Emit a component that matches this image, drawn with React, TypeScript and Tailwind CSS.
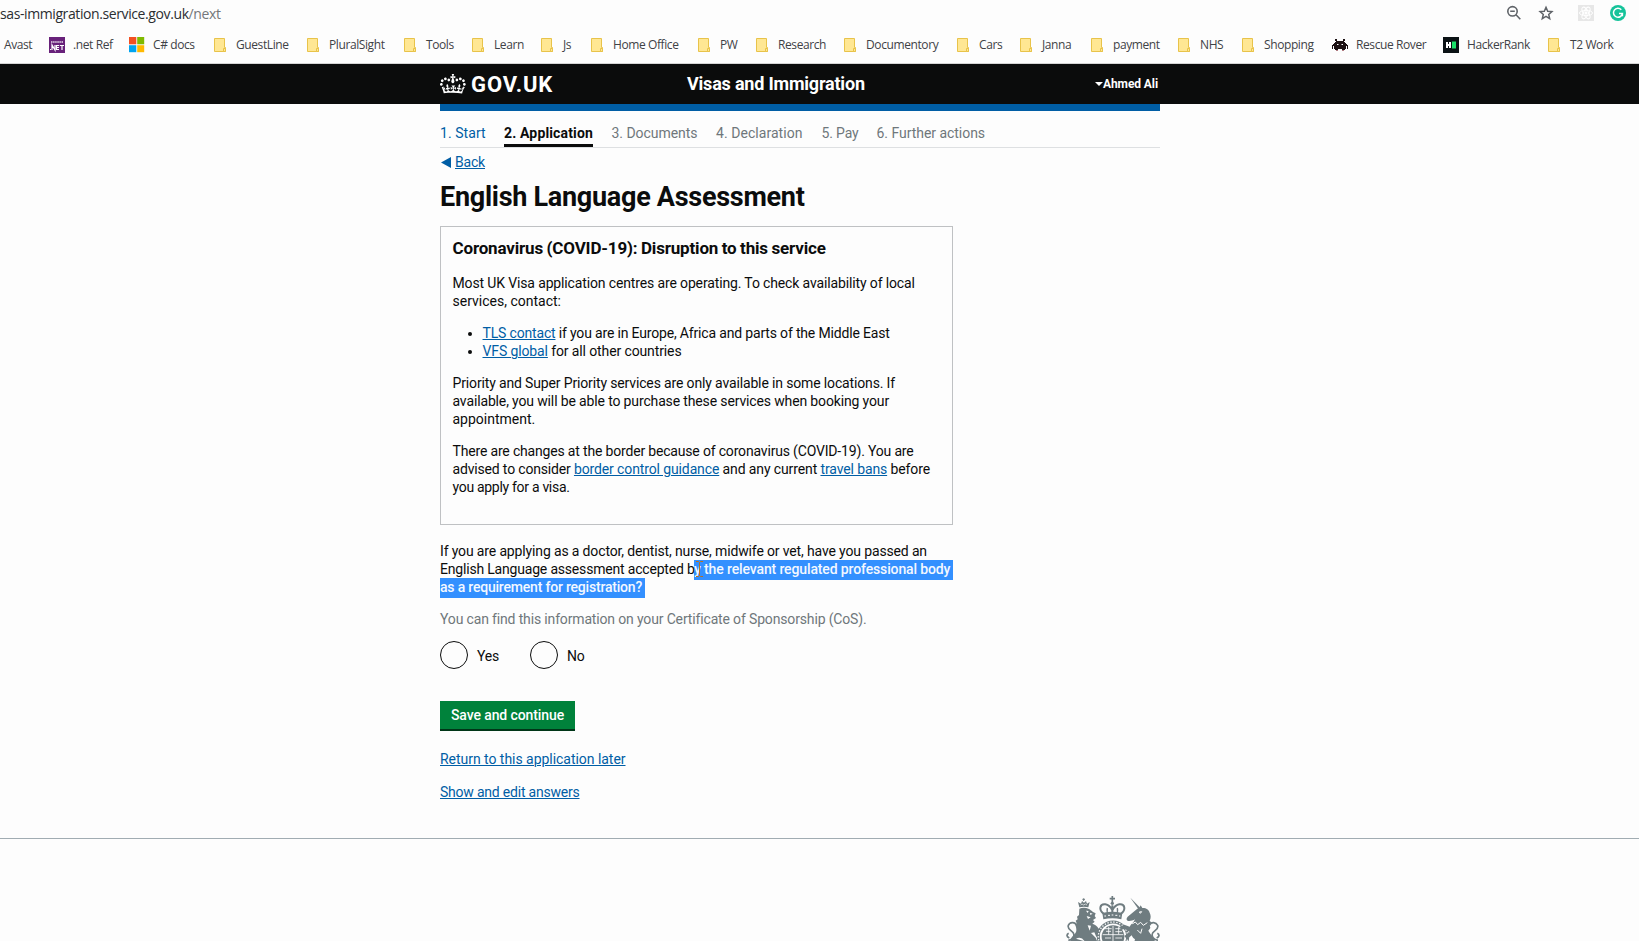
import React, { type ReactNode } from "react";

const FolderIcon = () => (
  <svg viewBox="0 0 16 16" className="h-4 w-4 shrink-0">
    <path d="M2.5 1.5h10v9h1v4h-11z" fill="#ffe793" stroke="#e8c34a" />
    <path d="M11.5 14.5v-3h2v3z" fill="#ffe793" stroke="#e8c34a" />
  </svg>
);

const NetIcon = () => (
  <svg viewBox="0 0 16 16" className="h-4 w-4 shrink-0">
    <rect width="16" height="16" fill="#68217a" />
    <path d="M2 5h12" stroke="#fff" strokeWidth="1.300" strokeDasharray="1.500 .6" opacity=".85" />
    <path d="M1 12.500h1M3 13V8l3 5V8M10 8.500H7.500v4H10M7.500 10.500H10M10.800 8.500H15M13 8.500V13" stroke="#fff" strokeWidth="1.200" fill="none" />
  </svg>
);

const MicrosoftIcon = () => (
  <svg viewBox="0 0 16 16" className="h-4 w-4 shrink-0">
    <path d="M0 0h7.300v7.300H0z" fill="#f25022" />
    <path d="M8.200 0h7v7.300h-7z" fill="#7fba00" />
    <path d="M0 8.200h7.300v7H0z" fill="#00a4ef" />
    <path d="M8.200 8.200h7v7h-7z" fill="#ffb900" />
  </svg>
);

const InvaderIcon = () => (
  <svg viewBox="0 0 16 16" className="h-4 w-4 shrink-0" fill="#1c1113">
    <path d="M3 2h2v2H3zM11 2h2v2h-2zM4 4h8v1H4zM3 5h10v1h1v1h1v1h1v4h-1V9h-1v3H2V9H1v3H0V8h1V7h1V6h1zM3 12h3v1H3zM10 12h3v1h-3z" />
    <path d="M5 7h1.500v1H5zM9.500 7H11v1H9.500z" fill="#fff" />
    <path d="M4 13h2v1H4zM10 13h2v1h-2z" fill="#b07a80" />
  </svg>
);

const HackerRankIcon = () => (
  <svg viewBox="0 0 16 16" className="h-4 w-4 shrink-0">
    <rect width="16" height="16" fill="#0b1215" />
    <path d="M3 5h2v2h1V5h2v6H6V9H5v2H3z" fill="#fff" />
    <rect x="9" y="4.500" width="4" height="7" fill="#1be26a" />
  </svg>
);

type Bookmark = { label: string; text: string; icon?: ReactNode };

const folder = <FolderIcon />;

const bookmarks: Bookmark[] = [
  { label: "Avast", text: "w-[29px]" },
  { label: ".net Ref", text: "w-[40px]", icon: <NetIcon /> },
  { label: "C# docs", text: "w-[43px]", icon: <MicrosoftIcon /> },
  { label: "GuestLine", text: "w-[53px]", icon: folder },
  { label: "PluralSight", text: "w-[57px]", icon: folder },
  { label: "Tools", text: "w-[28px]", icon: folder },
  { label: "Learn", text: "w-[29px]", icon: folder },
  { label: "Js", text: "w-[10px]", icon: folder },
  { label: "Home Office", text: "w-[67px]", icon: folder },
  { label: "PW", text: "w-[18px]", icon: folder },
  { label: "Research", text: "w-[48px]", icon: folder },
  { label: "Documentory", text: "w-[73px]", icon: folder },
  { label: "Cars", text: "w-[23px]", icon: folder },
  { label: "Janna", text: "w-[31px]", icon: folder },
  { label: "payment", text: "w-[47px]", icon: folder },
  { label: "NHS", text: "w-[24px]", icon: folder },
  { label: "Shopping", text: "w-[52px]", icon: folder },
  { label: "Rescue Rover", text: "w-[71px]", icon: <InvaderIcon /> },
  { label: "HackerRank", text: "w-[63px]", icon: <HackerRankIcon /> },
  { label: "T2 Work", text: "w-[46px]", icon: folder },
];

function BrowserBar() {
  return (
    <div className="h-16 border-b border-[#d5d5d5] font-['Open_Sans',sans-serif]">
      <div className="flex h-[26px] items-start justify-between pr-[13px]">
        <div className="pt-1 text-[14px] leading-5 tracking-[-0.4px] whitespace-nowrap text-[#2b2e31]">
          sas-immigration.service.gov.uk<span className="text-[#74777a]">/next</span>
        </div>
        <div className="flex items-center pt-[5px]">
          <svg viewBox="0 0 16 16" className="mr-4 h-4 w-4" fill="none" stroke="#5f6368" strokeWidth="1.600">
            <circle cx="6.500" cy="6.300" r="4.700" />
            <path d="M10 9.800l4.300 4.400M4.200 6.300h4.600" />
          </svg>
          <svg viewBox="0 0 16 16" className="mr-6 h-4 w-4" fill="none" stroke="#5f6368" strokeWidth="1.500">
            <path d="M8 2.300l1.700 3.900 4.200.4-3.200 2.800 1 4.200L8 11.400l-3.700 2.200 1-4.200L2.100 6.600l4.200-.4z" />
          </svg>
          <svg viewBox="0 0 16 16" className="mr-4 h-4 w-4" fill="none" stroke="#fff" strokeWidth="1">
            <rect width="16" height="16" fill="#e7e7e7" stroke="none" />
            <ellipse cx="8" cy="8" rx="6.500" ry="2.600" />
            <ellipse cx="8" cy="8" rx="6.500" ry="2.600" transform="rotate(60 8 8)" />
            <ellipse cx="8" cy="8" rx="6.500" ry="2.600" transform="rotate(120 8 8)" />
            <circle cx="8" cy="8" r="1.200" fill="#fff" />
          </svg>
          <svg viewBox="0 0 16 16" className="h-4 w-4" fill="none" stroke="#fff" strokeWidth="1.500">
            <circle cx="8" cy="8" r="8" fill="#15c39a" stroke="none" />
            <path d="M11.300 4.700A4.500 4.500 0 1 0 12.400 8.600H9M12.400 8.400v2.800" />
          </svg>
        </div>
      </div>
      <div className="flex gap-4 pt-[10px] pl-1">
        {bookmarks.map((b) => (
          <div key={b.label} className="flex shrink-0 items-center gap-2">
            {b.icon}
            <span className={`${b.text} text-[12px] leading-[18px] tracking-[-0.4px] whitespace-nowrap text-[#3f4246]`}>
              {b.label}
            </span>
          </div>
        ))}
      </div>
    </div>
  );
}

function Header() {
  return (
    <header className="h-10 bg-[#0b0c0c] text-white">
      <div className="ml-[440px] flex h-10 w-[720px] items-center pr-0.5">
        <svg viewBox="0 0 36 32" preserveAspectRatio="none" className="mr-[5px] mb-[3px] h-6 w-[26px]" fill="#fff">
          <path d="M6.700 12.200c1 .4 2.100-.1 2.500-1s-.1-2.100-1-2.500c-1-.4-2.100.1-2.500 1-.4 1 0 2.100 1 2.500m-4.300 2.500c1 .4 2.100-.1 2.500-1s-.1-2.100-1-2.500c-1-.4-2.100.1-2.500 1-.5 1 0 2.100 1 2.500m-1.300 4.800c1 .4 2.100-.1 2.500-1 .4-1-.1-2.100-1-2.500-1-.4-2.100.1-2.500 1-.4 1 0 2.100 1 2.500m10.400-5.800c1 .4 2.100-.1 2.500-1s-.1-2.100-1-2.500c-1-.4-2.100.1-2.500 1s0 2.100 1 2.500m17.400-1.500c-1 .4-2.100-.1-2.500-1s.1-2.100 1-2.500c1-.4 2.100.1 2.500 1 .5 1 0 2.100-1 2.500m4.300 2.500c-1 .4-2.100-.1-2.500-1s.1-2.100 1-2.500c1-.4 2.100.1 2.500 1 .5 1 0 2.100-1 2.500m1.300 4.800c-1 .4-2.100-.1-2.500-1-.4-1 .1-2.100 1-2.500 1-.4 2.100.1 2.500 1 .4 1 0 2.100-1 2.500m-10.400-5.800c-1 .4-2.100-.1-2.500-1s.1-2.100 1-2.500c1-.4 2.100.1 2.500 1s0 2.100-1 2.500m-5.300-4.900l2.400 1.300V6.500l-2.400.8c-.1-.1-.1-.2-.2-.2s1-3 1-3h-3.400l1 3c-.1.1-.2.1-.2.2-.1.1-2.400-.7-2.400-.7v3.500L17 8.800c-.1.1 0 .2.1.3l-1.400 4.200c-.1.2-.1.4-.1.7 0 1.100.8 2.100 1.900 2.200h.6C19.200 16 20 15.100 20 14c0-.2 0-.4-.1-.7l-1.400-4.200c.2-.1.3-.2.3-.3m-1 20.300c4.600 0 8.900.3 12.800.9 1.100-4.600 2.400-6.800 3.800-8.300l-2.600-.9c.3 1 .3 1.500 0 2.700-.4-.4-.8-1.100-1.100-2.300l-1.200 4c.7-.5 1.300-.8 2-.9-1.100 2.500-2.600 3.100-3.500 3-1.100-.2-1.700-1.200-1.500-2.100.3-1.200 1.500-1.500 2.100-.1 1.100-2.300-.8-3-2-2.300 1.900-1.900 2.100-3.500.6-5.600-2.100 1.600-2.100 3.200-1.200 5.500-1.200-1.400-3.200-.6-2.500 1.600.9-1.400 2.100-.5 1.900.8-.2 1.100-1.700 2.100-3.500 1.900-2.700-.2-2.900-2.100-2.900-3.600.7-.1 1.900.5 2.900 1.900l.4-4.300c-1.100 1.100-2.100 1.400-3.200 1.400.4-1.200 2.100-3 2.100-3h-5.400s1.700 1.900 2.100 3c-1.100 0-2.100-.2-3.200-1.400l.4 4.300c1-1.400 2.200-2 2.900-1.900-.1 1.500-.2 3.400-2.900 3.600-1.900.2-3.400-.8-3.500-1.900-.2-1.300 1-2.200 1.900-.8.700-2.300-1.200-3-2.500-1.600.9-2.200.9-3.900-1.200-5.500-1.500 2-1.300 3.700.6 5.600-1.200-.7-3.100 0-2 2.300.6-1.400 1.800-1.100 2.100.1.200.9-.3 1.900-1.500 2.100-.9.200-2.400-.5-3.500-3 .6 0 1.200.3 2 .9l-1.200-4c-.3 1.100-.7 1.900-1.100 2.300-.3-1.200-.2-1.800 0-2.700l-2.900.9C2.900 23 4.100 25.100 5.200 29.700 8.900 29.300 13.200 29.100 17.800 29.100" />
        </svg>
        <span className="w-[216px] pt-px text-[22px] leading-6 font-bold tracking-[0.9px]">GOV.UK</span>
        <span className="text-[18px] leading-6 font-bold tracking-[-0.2px] whitespace-nowrap">Visas and Immigration</span>
        <span className="ml-auto flex items-center text-[12px] leading-6 font-bold tracking-[-0.09px] whitespace-nowrap">
          <svg viewBox="0 0 8 4" className="h-1 w-2" fill="#fff">
            <path d="M0 0h8L4 4z" />
          </svg>
          Ahmed Ali
        </span>
      </div>
    </header>
  );
}

function Steps() {
  return (
    <nav className="flex h-[37px] items-start gap-[18.500px] border-b border-[#dee0e2] pt-[13px] leading-[18px] whitespace-nowrap text-[#6f777b]">
      <a className="w-[45.500px] tracking-[0.06px] text-[#005ea5]">1. Start</a>
      <a className="h-[23px] w-[89px] border-b-[3px] border-[#0b0c0c] font-bold tracking-[0.15px] text-[#0b0c0c]">2. Application</a>
      <a className="w-[86px] tracking-[-0.04px]">3. Documents</a>
      <a className="w-[87px] tracking-[0.05px]">4. Declaration</a>
      <a className="w-[36.500px] tracking-[-0.15px]">5. Pay</a>
      <a className="tracking-[-0.04px]">6. Further actions</a>
    </nav>
  );
}

const Link = ({ children, className = "" }: { children: ReactNode; className?: string }) => (
  <a className={`text-[#005ea5] underline decoration-1 underline-offset-[1px] ${className}`}>{children}</a>
);

function Notice() {
  return (
    <section className="mt-[13px] h-[299px] w-[513px] border border-[#bfc1c3] pt-[11px] pl-[11.500px] leading-[18px] whitespace-nowrap">
      <h2 className="mb-4 h-5 text-[17px] leading-5 font-bold tracking-[-0.170px] [word-spacing:-0.5px]">
        Coronavirus (COVID-19): Disruption to this service
      </h2>
      <p className="mb-[14px]">
        <span className="block tracking-[-0.138px]">Most UK Visa application centres are operating. To check availability of local</span>
        <span className="block">services, contact:</span>
      </p>
      <ul className="mb-[14px] list-disc pl-[30px]">
        <li className="tracking-[-0.17px]">
          <Link>TLS contact</Link> if you are in Europe, Africa and parts of the Middle East
        </li>
        <li className="tracking-[-0.12px]">
          <Link>VFS global</Link> for all other countries
        </li>
      </ul>
      <p className="mb-[14px]">
        <span className="block tracking-[-0.147px]">Priority and Super Priority services are only available in some locations. If</span>
        <span className="block tracking-[-0.141px]">available, you will be able to purchase these services when booking your</span>
        <span className="block">appointment.</span>
      </p>
      <p>
        <span className="block tracking-[-0.175px]">There are changes at the border because of coronavirus (COVID-19). You are</span>
        <span className="block tracking-[-0.12px]">
          <span className="tracking-[-0.170px]">advised to consider </span>
          <Link>border control guidance</Link> and any current <Link>travel bans</Link> before
        </span>
        <span className="block tracking-[-0.3px]">you apply for a visa.</span>
      </p>
    </section>
  );
}

function Question() {
  return (
    <div className="mt-[17px] w-[513px] leading-[18px] whitespace-nowrap">
      <div className="h-[18px] tracking-[-0.144px]">
        If you are applying as a doctor, dentist, nurse, midwife or vet, have you passed an
      </div>
      <div className="flex h-[18px]">
        <span className="w-[254px] tracking-[-0.19px]">English Language assessment accepted b</span>
        <span className="relative h-5 flex-1 bg-[#3390ff] font-medium tracking-[-0.13px] text-[#f3f8ff]">
          y the relevant regulated professional body
          <svg viewBox="0 0 7 16" className="absolute top-px left-[2px] h-4 w-[7px]" fill="none" stroke="#b8721f">
            <path d="M0 .5h2.500l1 1 1-1H7M3.500 1.500v13M0 15.500h2.500l1-1 1 1H7" />
          </svg>
        </span>
      </div>
      <div className="flex h-[18px]">
        <span className="h-5 w-[205px] bg-[#3390ff] font-medium tracking-[-0.2px] text-[#f3f8ff]">as a requirement for registration?</span>
      </div>
    </div>
  );
}

const Radio = ({ label, className }: { label: string; className: string }) => (
  <label className={`flex items-center ${className}`}>
    <span className="mr-[9px] h-7 w-7 rounded-full border-[1.500px] border-[#0b0c0c]" />
    <span className="pt-[2px] leading-[18px]">{label}</span>
  </label>
);

function Crest() {
  return (
    <svg viewBox="48 45 282 183" className="h-[61px] w-[94px]" fill="#6f7c80" stroke="none">
      <path d="M88 82l-4-16 9 5 3-8 6 5 6-5 3 8 8-5-4 16q-13-4-27 0z" />
      <path d="M92 76h20M101 63v-8M97 58h8" stroke="#6f7c80" strokeWidth="3" />
      <path d="M92 75l4-3 5 3 5-3 5 3" stroke="#fdfdfd" strokeWidth="2" fill="none" />
      <path d="M88 86c8-4 20-4 27 0 5 2 10 6 14 10l8 4-3 8 4 6-9 6 5 5-7 6c8 2 14 6 20 16 6 8 2 18-8 24l-6-14-10 2 14 14 10 24-4 35H72l-12-36c-2-14 4-24 14-34 7-8 5-14 4-20l-2-8 4-4-3-8 6-4-2-8 6-5z" />
      <path d="M108 92l8 1-3 6zM120 98l8 3-7 4zM110 108l12 4-8 5zM113 136l6 16 4-15zM78 176q16-8 26 8" fill="#fdfdfd" />
      <path d="M79 136c-4-12-20-10-24 0-4 12 10 15 15 23 5 10-2 20-15 22M56 160c-7 4-7 10 2 14" fill="none" stroke="#6f7c80" strokeWidth="5" />
      <path d="M187 48v18M179 56h16" stroke="#6f7c80" strokeWidth="5" />
      <circle cx="187" cy="70" r="5" />
      <path d="M187 76v24M162 102c-18-14-12-31 4-29 11 2 17 10 21 18 4-8 10-16 21-18 16-2 22 15 4 29" fill="none" stroke="#6f7c80" strokeWidth="6" />
      <path d="M172 84c-2 9 0 15 4 19M202 84c2 9 0 15-4 19" fill="none" stroke="#6f7c80" strokeWidth="4" />
      <path d="M157 99q30-8 60 0l-3 19q-27-7-54 0z" />
      <path d="M163 108h5M174 106h6M185 105h5M196 106h6M207 108h4" stroke="#fdfdfd" strokeWidth="3" />
      <circle cx="189" cy="170" r="44" fill="none" stroke="#6f7c80" strokeWidth="9" />
      <circle cx="189" cy="170" r="44" fill="none" stroke="#fdfdfd" strokeWidth="4" strokeDasharray="4 5" />
      <circle cx="189" cy="170" r="34" />
      <path d="M189 138v70M158 164h62M165 146h20M168 154h15M196 146h16M196 155h20M165 174h18M196 174h20M176 140v24M206 141v22" stroke="#fdfdfd" strokeWidth="2.500" fill="none" />
      <path d="M241 53l31 32-5 5z" />
      <path d="M262 86l6-2 4-8 5 8c10-1 20 5 22 14 4 8 4 16 0 24l6 6-6 6 2 10-6 8c6 12 16 16 20 32l2 44h-76l14-50c-4-2-8-6-10-12l-14 12-8-10 16-12-14-10-12 4-4-10 14-6 16 6c4-8 12-12 16-22-6 3-13 6-20 5-6-1-7-8-2-13z" />
      <path d="M268 96l7-1-4 5zM240 124l8 7 8-5 7 8 9-7 8 9 12-8M262 150l10 10 4-14" stroke="#fdfdfd" strokeWidth="3" fill="none" />
      <path d="M298 136c6-12 20-10 25 0 4 12-10 15-15 23-5 10 3 20 16 22M322 160c7 4 7 10-2 14" fill="none" stroke="#6f7c80" strokeWidth="5" />
    </svg>
  );
}

export default function App() {
  return (
    <div className="h-[941px] overflow-hidden bg-[#fdfdfd] font-[Roboto,sans-serif] text-[14px] text-[#0b0c0c]">
      <BrowserBar />
      <Header />
      <main className="ml-[440px] h-[734px] w-[720px]">
        <div className="h-[7px] bg-[#005ea5]" />
        <Steps />
        <div className="mt-[5px] flex h-[18px] items-center leading-[18px]">
          <svg viewBox="0 0 10 11" className="mr-1 ml-px h-[11px] w-[10px]" fill="#005ea5">
            <path d="M10 0v11L0 5.500z" />
          </svg>
          <Link className="tracking-[-0.19px]">Back</Link>
        </div>
        <h1 className="mt-[10px] h-8 text-[27px] leading-8 font-bold tracking-[-0.281px] whitespace-nowrap">
          English Language Assessment
        </h1>
        <Notice />
        <Question />
        <p className="mt-[14px] leading-[18px] tracking-[-0.153px] text-[#6f777b]">
          You can find this information on your Certificate of Sponsorship (CoS).
        </p>
        <div className="mt-[13px] flex h-7 tracking-[-0.24px]">
          <Radio label="Yes" className="w-[90px]" />
          <Radio label="No" className="w-[60px]" />
        </div>
        <button className="mt-8 block h-[30px] w-[135px] border-b-2 border-[#003618] bg-[#00823b] pb-px text-center leading-[18px] font-medium tracking-[-0.1px] text-white">
          Save and continue
        </button>
        <div className="mt-[19px] leading-[18px]">
          <Link className="tracking-[-0.035px]">Return to this application later</Link>
        </div>
        <div className="mt-[15px] leading-[18px]">
          <Link className="tracking-[-0.213px]">Show and edit answers</Link>
        </div>
      </main>
      <footer className="border-t border-[#a1acb2]">
        <div className="ml-[440px] flex w-[720px] justify-end pt-[56px]">
          <Crest />
        </div>
      </footer>
    </div>
  );
}
